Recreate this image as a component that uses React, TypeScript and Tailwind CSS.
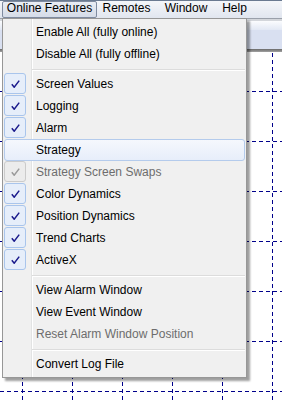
import React from "react";

type Item =
  | { kind: "item"; label: string; checked?: boolean; disabled?: boolean; hover?: boolean }
  | { kind: "sep" };

const items: Item[] = [
  { kind: "item", label: "Enable All (fully online)" },
  { kind: "item", label: "Disable All (fully offline)" },
  { kind: "sep" },
  { kind: "item", label: "Screen Values", checked: true },
  { kind: "item", label: "Logging", checked: true },
  { kind: "item", label: "Alarm", checked: true },
  { kind: "item", label: "Strategy", hover: true },
  { kind: "item", label: "Strategy Screen Swaps", checked: true, disabled: true },
  { kind: "item", label: "Color Dynamics", checked: true },
  { kind: "item", label: "Position Dynamics", checked: true },
  { kind: "item", label: "Trend Charts", checked: true },
  { kind: "item", label: "ActiveX", checked: true },
  { kind: "sep" },
  { kind: "item", label: "View Alarm Window" },
  { kind: "item", label: "View Event Window" },
  { kind: "item", label: "Reset Alarm Window Position", disabled: true },
  { kind: "sep" },
  { kind: "item", label: "Convert Log File" },
];

function Check({ disabled }: { disabled?: boolean }) {
  return (
    <div
      className={
        disabled
          ? "flex h-[21px] w-[22px] items-center justify-center rounded-[3px] border border-[#cbcbcb] bg-[#ececec]"
          : "flex h-[21px] w-[22px] items-center justify-center rounded-[3px] border border-[#a9c5ec] bg-[#e6eefa]"
      }
    >
      <svg width="9" height="8" viewBox="0 0 9 8">
        <path
          d="M0.8 4.2 L3.2 7.2 L8.2 0.6"
          fill="none"
          stroke={disabled ? "#9a9a9a" : "#1a1a8c"}
          strokeWidth="1.5"
          strokeLinejoin="miter"
        />
      </svg>
    </div>
  );
}

function Grid() {
  const xs = [22.5, 72.5, 122.5, 172.5, 222.5, 272.5];
  const ys = [39.5, 89.5, 139.5, 189.5, 239.5, 289.5, 339.5];
  return (
    <svg width="282" height="348" className="block">
      {xs.map((x) => (
        <line key={"x" + x} x1={x} y1={1} x2={x} y2={348} stroke="#00008b" strokeWidth="1" strokeDasharray="4 3" />
      ))}
      {ys.map((y) => (
        <line key={"y" + y} x1={0} y1={y} x2={282} y2={y} stroke="#00008b" strokeWidth="1" strokeDasharray="4 3" />
      ))}
    </svg>
  );
}

export default function App() {
  return (
    <div className="relative h-[400px] w-[282px] overflow-hidden bg-white font-['Liberation_Sans',Arial,sans-serif] text-[12px] text-black">
      {/* Menu bar */}
      <div className="flex h-[18px] items-start border-t border-[#6a7a91] bg-gradient-to-b from-[#f4f6fa] to-[#e1e6ef]">
        <div className="ml-[2px] h-[17px] w-[95px] whitespace-nowrap rounded-[2px] border border-[#7f8ba0] bg-gradient-to-b from-[#e9edf4] to-[#d5dce8] text-center leading-[12px]">
          Online Features
        </div>
        <div className="h-[17px] w-[59px] whitespace-nowrap text-center leading-[14px]">Remotes</div>
        <div className="h-[17px] w-[60px] whitespace-nowrap text-center leading-[14px]">Window</div>
        <div className="h-[17px] w-[37px] whitespace-nowrap text-center leading-[14px]">Help</div>
      </div>

      {/* Toolbar strip behind */}
      <div className="flex h-[34px] flex-col">
        <div className="h-px bg-[#9aa0aa]" />
        <div className="h-[2px] bg-[#d3d6db]" />
        <div className="h-[9px] bg-gradient-to-b from-[#fbfcfe] to-[#e2e8f4]" />
        <div className="h-[19px] bg-[#d9e0f1]" />
        <div className="h-[3px] bg-gradient-to-b from-[#6a6a6a] to-[#a2a2a2]" />
      </div>

      {/* Canvas */}
      <div className="h-[348px]">
        <Grid />
      </div>

      {/* Dropdown menu */}
      <div className="absolute left-[2px] top-[18px] h-[360px] w-[245px] border border-[#979797] bg-[#f0f0f0] pt-[2px] shadow-[3px_3px_2px_rgba(0,0,0,0.38)]">
        <div className="absolute bottom-0 left-[28px] top-0 w-px bg-[#e2e3e3]" />
        <div className="absolute bottom-0 left-[29px] top-0 w-px bg-white" />
        {items.map((it, i) =>
          it.kind === "sep" ? (
            <div key={i} className="relative h-[8px] pl-[29px] pr-[1px] pt-[4px]">
              <div className="h-px bg-[#dcdcdc]" />
              <div className="h-px bg-white" />
            </div>
          ) : (
            <div
              key={i}
              className={
                it.hover
                  ? "relative mx-[1px] flex h-[22px] items-start rounded-[3px] border border-[#b4cbec] bg-gradient-to-b from-[#f5f8fd] to-[#e7eefa]"
                  : "relative mx-[1px] flex h-[22px] items-start"
              }
            >
              <div className={it.hover ? "w-[31px] shrink-0" : "w-[32px] shrink-0"}>
                {it.checked ? <Check disabled={it.disabled} /> : null}
              </div>
              <div
                className={
                  (it.hover ? "leading-[20px] " : "leading-[22px] ") +
                  (it.disabled ? "whitespace-nowrap text-[#6d6d6d]" : "whitespace-nowrap text-black")
                }
              >
                {it.label}
              </div>
            </div>
          )
        )}
      </div>
    </div>
  );
}
